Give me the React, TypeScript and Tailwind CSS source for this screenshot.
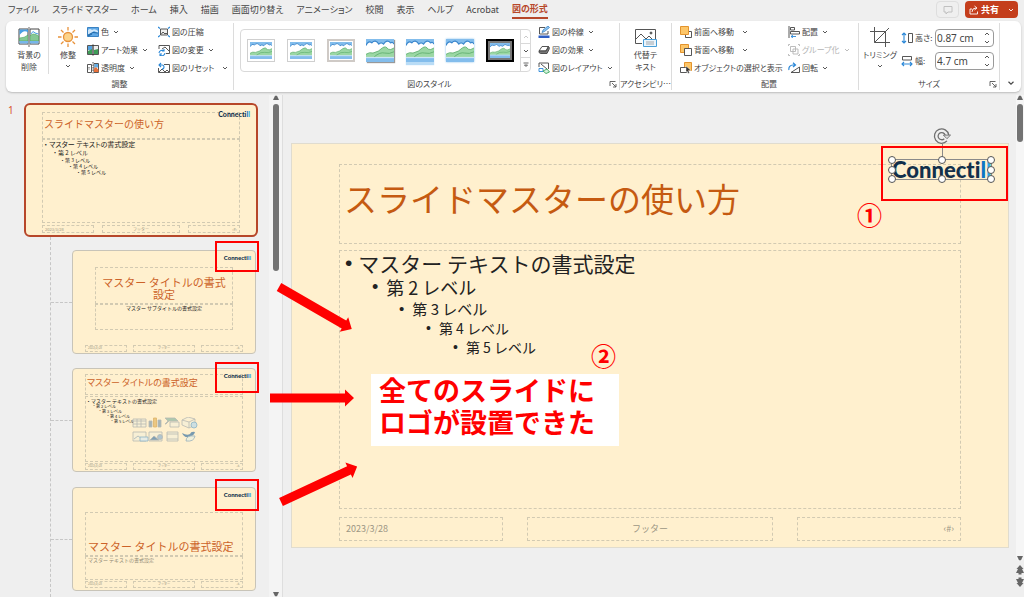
import type { ReactNode } from 'react';
import clsx from 'clsx';

const TABS = ['ファイル', 'スライド マスター', 'ホーム', '挿入', '描画', '画面切り替え', 'アニメーション', '校閲', '表示', 'ヘルプ', 'Acrobat'];

/* ---------- small glyphs ---------- */

function Chevron({ className = '' }: { className?: string }) {
  return (
    <svg viewBox="0 0 6 6" className={clsx('h-1.5 w-1.5 shrink-0', className)} fill="none" stroke="currentColor" strokeWidth=".9">
      <path d="M1 2l2 2 2-2" />
    </svg>
  );
}

function Triangle({ up = false }: { up?: boolean }) {
  return (
    <svg viewBox="0 0 8 6" className="h-1.5 w-2 shrink-0" fill="#666">
      <path d={up ? 'M3 .8h2L7 5H1z' : 'M3 5.2h2L7 1H1z'} />
    </svg>
  );
}

function DoubleTriangle({ up = false }: { up?: boolean }) {
  return (
    <svg viewBox="0 0 8 10" className="h-2.5 w-2 shrink-0" fill="#666">
      <path d={up ? 'M4 0l3.500 4H6l2 4H5.500v1.500h-3V8H0l2-4H.5z' : 'M4 10L.5 6H2L0 2h2.500V.5h3V2H8L6 6h1.500z'} />
    </svg>
  );
}

/** Landscape used by the gallery. */
function Landscape({ className = '' }: { className?: string }) {
  return (
    <svg viewBox="0 0 24 18" preserveAspectRatio="none" className={className}>
      <path d="M0 0h24v18H0z" fill="#83bdec" />
      <path d="M0 5q2-4 5-2 3-3 6 1 2-2 4 0 3-4 6-1 2-1 3 1v8H0z" fill="#fff" />
      <path d="M0 5q2-4 5-2 3-3 6 1 2-2 4 0 3-4 6-1 2-1 3 1" fill="none" stroke="#3a86cc" strokeWidth="1" />
      <path d="M0 12q3-2 6-1 5-1 8-4 3-2 5 1 2 1 5-1v7H0z" fill="#9bd7a4" />
      <path d="M0 12q3-2 6-1 5-1 8-4 3-2 5 1 2 1 5-1M7 14q5-4 9-3 4 1 8-1" fill="none" stroke="#5fae6d" strokeWidth=".7" />
      <path d="M0 14h24v1H0z" fill="#fff" opacity=".6" />
    </svg>
  );
}

function Icon12({ children }: { children: ReactNode }) {
  return (
    <svg viewBox="0 0 12 12" className="h-3 w-3 shrink-0" fill="none" stroke="#444" strokeWidth=".9">
      {children}
    </svg>
  );
}

const icons = {
  color: (
    <Icon12>
      <path d="M.5 1.500h11v9H.5z" fill="#5fa8e6" stroke="#2b78bd" />
      <path d="M1 4q2-2 4 0 3-2 6 1v2L7 5 1 9z" fill="#cfe6f9" stroke="none" />
      <path d="M1 9q5-4 10-2M1 10l4-2" stroke="#17609f" />
    </Icon12>
  ),
  artistic: (
    <Icon12>
      <path d="M.5 1.500h11v9H.5z" fill="#eee" />
      <path d="M1 2h4v4H1z" fill="#56a3e2" stroke="none" />
      <path d="M1 7l4-2v5H1zM7 6l4-1v5H7z" fill="#3f9d58" stroke="none" />
      <path d="M6 .5v11" stroke="#333" strokeWidth="1.200" />
    </Icon12>
  ),
  transparency: (
    <Icon12>
      <path d="M.5 2.500h4v8h-4zM7 1.500h4.500v9H7z" />
      <path d="M7.500 2h3.500v3.500H7.500z" fill="#63aee6" stroke="none" />
      <path d="M7 10V7l2-2 2.500 3v2z" fill="#e8703a" stroke="none" />
      <path d="M6 0v12M2 5v3" strokeDasharray="1.500 1" />
    </Icon12>
  ),
  compress: (
    <Icon12>
      <path d="M2.500 3h7v6h-7z" fill="#eee" />
      <path d="M3 8.500l2-2.500 2 2 1-1 1 1" />
      <path d="M0 1l2 1.500M12 1l-2 1.500M0 11l2-1.500M12 11l-2-1.500" stroke="#2b88d8" strokeWidth="1.200" />
    </Icon12>
  ),
  change: (
    <Icon12>
      <path d="M1 5V1.500h10.500v8H8" />
      <path d="M4 5l3-2 4 4" />
      <path d="M1 9a3 3 0 015-2M7 9a3 3 0 01-5 2M6 5v2H4M2 12v-2h2" stroke="#2b88d8" strokeWidth="1.100" />
    </Icon12>
  ),
  reset: (
    <Icon12>
      <path d="M6 2.500h5.500v8h-11V6" />
      <path d="M1 10l3-3 3 3 2-2 2 2" />
      <path d="M1 3h3a2 2 0 010 4M3 1L1 3l2 2" stroke="#2b88d8" strokeWidth="1.100" />
    </Icon12>
  ),
  border: (
    <Icon12>
      <path d="M7 1.500H1.500V8H10V5" />
      <path d="M4 6.500l1-2.500 5-4 1.500 1.500-5 4z" fill="#8ec5f2" stroke="#2b78bd" strokeWidth=".7" />
      <path d="M.5 9.500h11V12H.5z" fill="#2f5fc4" stroke="none" />
    </Icon12>
  ),
  effect: (
    <Icon12>
      <path d="M1 7l3-4.500h6.500L8 7z" fill="#fff" />
      <path d="M1 7h7l2.500-4.500q1.500 1 .5 3L9 9.500H2.500Q.5 9 1 7z" fill="#777" />
    </Icon12>
  ),
  layout: (
    <Icon12>
      <path d="M1 5V1h9.500v6" />
      <path d="M3 2l6 5" />
      <path d="M1 6.500h4v3H1z" fill="#fff" stroke="#2b88d8" />
      <path d="M5 9l4-2 2.500 3L8 11.500z" fill="#d6f2dd" stroke="#3ba55c" />
    </Icon12>
  ),
  front: (
    <Icon12>
      <path d="M9 5.500h2.500v6h-6V9" />
      <path d="M.5.5h8v8h-8z" fill="#fdc668" stroke="#e08a1e" />
    </Icon12>
  ),
  back: (
    <Icon12>
      <path d="M.5.5h8v8h-8z" fill="#fdc668" stroke="#e08a1e" />
      <path d="M4.500 4.500h7v7h-7z" fill="#fff" />
    </Icon12>
  ),
  select: (
    <Icon12>
      <path d="M4.500.5h7v8h-7z" fill="#fdc668" stroke="#e08a1e" />
      <path d="M.5 5.500h6v5h-6z" fill="#fff" />
      <path d="M6 4l5 4.500H8.500l1 2.500-1.500.5-1-2.500L6 10z" fill="#333" stroke="#fff" strokeWidth=".4" />
    </Icon12>
  ),
  align: (
    <Icon12>
      <path d="M1 0v12M2.500 1.500h4v2.500h-4zM2.500 5.500h9V8h-9z" />
      <path d="M8 10.500H3M5 9l-2 1.500L5 12" stroke="#2b88d8" />
    </Icon12>
  ),
  group: (
    <Icon12>
      <g stroke="#b5b5b5">
        <path d="M2.500 2.500h5v5h-5zM5 5h5v5H5z" />
        <path d="M.5 2V.5H2M10 .5h1.500V2M.5 10v1.500H2M10 11.500h1.500V10" />
      </g>
    </Icon12>
  ),
  rotate: (
    <Icon12>
      <path d="M3 10.500h8.500V5z" />
      <path d="M1 8a4 4 0 014-5h2M5 .8L7.500 3 5 5" stroke="#2b88d8" strokeWidth="1.200" />
    </Icon12>
  ),
  height: (
    <Icon12>
      <path d="M7.500 1.500h4v9h-4z" />
      <path d="M3 .8v10.400M1 3l2-2 2 2M1 9l2 2 2-2" stroke="#2b88d8" strokeWidth="1.100" />
    </Icon12>
  ),
  width: (
    <Icon12>
      <path d="M1.500 1.500h9v3.500h-9z" />
      <path d="M.8 9h10.400M3 7L1 9l2 2M9 7l2 2-2 2" stroke="#2b88d8" strokeWidth="1.100" />
    </Icon12>
  ),
};

/* ---------- ribbon ---------- */

interface CommandProps {
  icon: ReactNode;
  label: string;
  menu?: boolean;
  disabled?: boolean;
  wide?: boolean;
}

function Command({ icon, label, menu = true, disabled = false, wide = false }: CommandProps) {
  return (
    <button type="button" disabled={disabled} className={clsx('flex h-[18px] items-center gap-0.5 whitespace-nowrap', disabled && 'text-[#b5b5b5]')}>
      {icon}
      <span>{label}</span>
      {menu && <Chevron className={wide ? 'ml-1.5' : 'ml-0.5'} />}
    </button>
  );
}

function Launcher() {
  return (
    <svg viewBox="0 0 8 8" className="h-2 w-2" fill="none" stroke="#555" strokeWidth=".9">
      <path d="M1 6V1.500h5.500M3 3l4 4M7 4v3H4" />
    </svg>
  );
}

interface GroupProps {
  label: string;
  className?: string;
  launcher?: boolean;
  children: ReactNode;
}

function Group({ label, className = '', launcher = false, children }: GroupProps) {
  return (
    <section aria-label={label} className={clsx('my-0.5 flex flex-col border-r border-[#dcdcdc]', className)}>
      <div className="flex h-[55px]">{children}</div>
      <div className="relative flex h-3 items-center justify-center">
        <span className="whitespace-nowrap">{label}</span>
        {launcher && (
          <button type="button" aria-label={`${label} の詳細`} className="absolute right-0.5">
            <Launcher />
          </button>
        )}
      </div>
    </section>
  );
}

const FRAMES = [
  'border border-[#cfcfcf] p-0.5',
  'border border-[#cfcfcf] p-0.5',
  'border-2 border-[#cfcac6] p-px',
  'shadow-[1px_1px_1px_#999]',
  'shadow-[0_3px_1px_#b9dcf6]',
  'shadow-[0_0_2px_#83bdec]',
  'border-2 border-black bg-[#777] p-0.5',
];

function Gallery() {
  return (
    <div className="mt-1.5 flex h-[43px] flex-1 rounded border border-[#d9d9d9]">
      <div className="flex flex-1 items-center justify-around">
        {FRAMES.map((frame, i) => (
          <button key={i} type="button" aria-label={`スタイル ${i + 1}`} className={clsx('h-[23px] w-7', frame)}>
            <Landscape className="h-full w-full" />
          </button>
        ))}
      </div>
      <div className="flex w-2.5 flex-col divide-y divide-[#d9d9d9] border-l border-[#d9d9d9]">
        <button type="button" aria-label="上へ" className="flex flex-1 items-center justify-center text-[#c4c4c4]">
          <Chevron className="rotate-180" />
        </button>
        <button type="button" aria-label="下へ" className="flex flex-1 items-center justify-center">
          <Chevron />
        </button>
        <button type="button" aria-label="その他" className="flex flex-1 items-center justify-center">
          <svg viewBox="0 0 6 6" className="h-1.5 w-1.5" fill="none" stroke="currentColor" strokeWidth=".8">
            <path d="M.5 1h5M1.500 3L3 4.500 4.500 3z" />
          </svg>
        </button>
      </div>
    </div>
  );
}

function SizeField({ id, icon, label, value }: { id: string; icon: ReactNode; label: string; value: string }) {
  return (
    <div className="flex h-[18px] items-center">
      {icon}
      <label htmlFor={id} className="ml-0.5 w-5 whitespace-nowrap">
        {label}
      </label>
      <div className="flex h-[18px] w-[59px] items-center rounded border border-[#9a9a9a] pl-px">
        <input id={id} defaultValue={value} className="w-0 flex-1 font-['Noto_Sans',sans-serif] text-[10px] text-[#444] outline-none" />
        <span className="flex w-3 flex-col items-center gap-0.5">
          <Chevron className="rotate-180" />
          <Chevron />
        </span>
      </div>
    </div>
  );
}

function Ribbon() {
  return (
    <div className="mr-[3px] ml-1.5 flex h-[71px] rounded-md bg-white text-[8px] leading-[12px] text-[#444] shadow-[0_1px_2px_#bbb] [font-feature-settings:'palt']">
      <Group label="調整" className="w-[228px]">
        <button type="button" className="my-1 flex w-[43px] flex-col items-center border-r border-[#dcdcdc] pl-1">
          <svg viewBox="0 0 22 20" className="mb-0.5 h-5 w-[22px] shrink-0" fill="none">
            <path d="M1 2h9v15H1z" fill="#fff" stroke="#444" />
            <path d="M12 2h9v15h-9z" fill="#fff" stroke="#444" />
            <path d="M1.500 2.500H10v3Q6 2 1.500 8z" fill="#4a9fe4" />
            <path d="M13 7q2-4 4-1l3.500 1" stroke="#4a9fe4" />
            <path d="M1.500 11q5 0 8.500-3v6H1.500zM12 9q3-4 8.500 0v5H12z" fill="#86c894" stroke="#4aa55c" strokeWidth=".6" />
            <path d="M1.500 14h19v2.500h-19z" fill="#76b6ea" />
            <path d="M11 0v20" stroke="#999" strokeWidth="1.500" />
          </svg>
          <span className="whitespace-nowrap">
            背景の
            <br />
            削除
          </span>
        </button>
        <button type="button" className="my-1 flex w-[38px] flex-col items-center">
          <svg viewBox="0 0 20 20" className="mb-0.5 h-5 w-5 shrink-0" fill="none" stroke="#e8923b" strokeWidth="1.300">
            <circle cx="10" cy="10" r="4.500" fill="#fcd38a" />
            <path d="M10 0v3.500M10 16.500V20M0 10h3.500M16.500 10H20M3 3l2.500 2.500M14.500 14.500L17 17M17 3l-2.500 2.500M5.500 14.500L3 17" />
          </svg>
          <span>修整</span>
          <Chevron className="mt-0.5" />
        </button>
        <div className="flex w-[71px] flex-col">
          <Command icon={icons.color} label="色" />
          <Command icon={icons.artistic} label="アート効果" />
          <Command icon={icons.transparency} label="透明度" />
        </div>
        <div className="flex flex-col">
          <Command icon={icons.compress} label="図の圧縮" menu={false} />
          <Command icon={icons.change} label="図の変更" />
          <Command icon={icons.reset} label="図のリセット" wide />
        </div>
      </Group>

      <Group label="図のスタイル" launcher className="flex-1 pl-1.5">
        <Gallery />
        <div className="ml-[7px] flex w-[81px] flex-col">
          <Command icon={icons.border} label="図の枠線" />
          <Command icon={icons.effect} label="図の効果" />
          <Command icon={icons.layout} label="図のレイアウト" />
        </div>
      </Group>

      <Group label="アクセシビリ…" className="w-[52px]">
        <button type="button" className="my-1 flex flex-1 flex-col items-center">
          <svg viewBox="0 0 24 20" className="mb-0.5 h-5 w-6 shrink-0" fill="none" stroke="#555">
            <path d="M8 16.500H1.500v-14h20V12" />
            <path d="M2 12l5-5 5 5 3-3 4 4" />
            <circle cx="17" cy="6" r="1" fill="#555" />
            <path d="M9.500 12.500h13v7h-13z" fill="#eaf5fd" stroke="#4a9fd8" />
            <path d="M12 15h8M12 17h8" stroke="#888" strokeWidth=".7" />
          </svg>
          <span className="whitespace-nowrap">
            代替テ
            <br />
            キスト
          </span>
        </button>
      </Group>

      <Group label="配置" className="w-[187px] pl-2">
        <div className="flex w-[108px] flex-col">
          <Command icon={icons.front} label="前面へ移動" wide />
          <Command icon={icons.back} label="背面へ移動" wide />
          <Command icon={icons.select} label="オブジェクトの選択と表示" menu={false} />
        </div>
        <div className="flex flex-col">
          <Command icon={icons.align} label="配置" />
          <Command icon={icons.group} label="グループ化" disabled />
          <Command icon={icons.rotate} label="回転" />
        </div>
      </Group>

      <Group label="サイズ" launcher className="w-[141px]">
        <button type="button" className="my-1 flex w-[42px] flex-col items-center">
          <svg viewBox="0 0 20 20" className="mb-0.5 h-5 w-5 shrink-0" fill="none" stroke="#555">
            <path d="M4.500 0v15.500H20M0 4.500h15.500V20M4.500 15.500L19 1" />
          </svg>
          <span className="whitespace-nowrap">トリミング</span>
          <Chevron className="mt-0.5" />
        </button>
        <div className="mt-1.5 flex flex-col gap-[5px]">
          <SizeField id="pic-height" icon={icons.height} label="高さ:" value="0.87 cm" />
          <SizeField id="pic-width" icon={icons.width} label="幅:" value="4.7 cm" />
        </div>
      </Group>

      <button type="button" aria-label="リボンを折りたたむ" className="flex w-[21px] items-end justify-center pb-1.5">
        <Chevron className="scale-125" />
      </button>
    </div>
  );
}

function TabBar() {
  return (
    <header className="flex h-[21px] items-start pr-1.5 pl-2 text-[9px] text-[#444]">
      <nav className="flex h-5 items-center gap-[13px] whitespace-nowrap [font-feature-settings:'palt']">
        {TABS.map((tab) => (
          <button key={tab} type="button" className="leading-[16px]">
            {tab}
          </button>
        ))}
        <button type="button" className="border-b-2 border-[#b7472a] leading-[16px] font-bold text-[#b7472a]">
          図の形式
        </button>
      </nav>
      <div className="mt-px ml-auto flex gap-1.5">
        <button type="button" aria-label="コメント" className="flex h-[17px] w-[23px] items-center justify-center rounded border border-[#dedede]">
          <svg viewBox="0 0 10 10" className="h-2.5 w-2.5" fill="none" stroke="#c0c0c0">
            <path d="M1 1.500h8v5.500H5L3 9V7H1z" />
          </svg>
        </button>
        <button type="button" className="flex h-[17px] w-[53px] items-center rounded bg-[#c43e1c] pr-1 pl-1 font-bold text-white">
          <svg viewBox="0 0 10 10" className="mr-0.5 h-2.5 w-2.5" fill="none" stroke="#fff" strokeWidth=".9">
            <path d="M3 4H1v5h7.500V6.500M3 7q0-4 4-4M5.500 1l2.500 2-2.500 2" />
          </svg>
          共有
          <Chevron className="ml-auto" />
        </button>
      </div>
    </header>
  );
}

/* ---------- slides ---------- */

function Logo({ className }: { className: string }) {
  return (
    <span className={clsx("flex font-['Lato',sans-serif] leading-none font-black text-[#12304c] [font-variant-ligatures:none]", className)}>
      Connecti<span className="text-[#0f75c4]">l</span>
      <span className="text-[#29abe2]">l</span>
    </span>
  );
}

const LEVELS = ['第 2 レベル', '第 3 レベル', '第 4 レベル', '第 5 レベル'];

function Footers({ className }: { className: string }) {
  return (
    <div className={clsx('grid grid-cols-[2fr_3fr_2fr] text-[#9c9684] *:flex *:items-center *:border *:border-dashed *:border-[#d2cab2]', className)}>
      <span>2023/3/28</span>
      <span className="justify-center">フッター</span>
      <span className="justify-end">‹#›</span>
    </div>
  );
}

const THUMB_FOOTER = 'gap-1.5 h-[7px] text-[3px] leading-none *:px-0.5';
const BOX = 'border border-dashed border-[#d2cab2]';

function Thumb({ mark, children }: { mark: string; children: ReactNode }) {
  return (
    <li className="relative ml-[72px] h-[104px] w-[184px] rounded border border-[#c8c4b8] bg-[#fff0ce] px-3 before:absolute before:top-1/2 before:-left-[22px] before:w-[21px] before:border-t before:border-dashed before:border-[#c6c6c6]">
      {children}
      <Logo className="absolute top-1 right-1 text-[6px]" />
      <span className={clsx('absolute -right-1 w-11 border-2 border-[#f00]', mark)} />
    </li>
  );
}

function ContentIcons() {
  return (
    <svg viewBox="0 0 66 26" className="absolute top-12 left-[59px] h-[26px] w-[66px] opacity-70" fill="none" stroke="#9aa3a8" strokeWidth=".8">
      <path d="M1 2h13v8H1zM1 4h13M5 2v8M9 2v8M1 7h13" fill="#f5efd8" />
      <path d="M17 4h3v6h-3z" fill="#7f9cb0" />
      <path d="M21.500 1h3v9h-3z" fill="#e3b662" stroke="#d09c40" />
      <path d="M26 3h3v7h-3z" fill="#7f9cb0" />
      <path d="M33 1h10l3 3h-9l-3 3H33l3-3z" fill="#8cb8a0" />
      <path d="M38 5h9v5h-9z" fill="#f5efd8" />
      <path d="M50 3l6-3 7 2v6l-6 3-7-3zM50 3l7 2 6-3M57 5v6" fill="#f5efd8" />
      <circle cx="62" cy="8" r="3" fill="#b9d8ea" stroke="#5d9cc4" />
      <path d="M1 15h13v9H1z" fill="#f5efd8" />
      <path d="M2 22l4-3 3 2" stroke="#7f9cb0" />
      <path d="M8 20h8v4H8z" fill="#dce9ee" stroke="#5d9cc4" />
      <path d="M17 15h13v9H17z" fill="#f5efd8" />
      <path d="M18 23l4-4 5 4z" fill="#4d7fa8" />
      <circle cx="28" cy="20" r="2.500" fill="#8fb4cf" />
      <path d="M35 15h11v9H35zM35 17h11M35 22h11" fill="#f5efd8" />
      <path d="M50 16q5 3 8 1 1-3 5-2-1 4-6 5-5 1-7-4z" fill="#3f76a3" stroke="none" />
      <path d="M54 24q0-6 9-5-1 6-9 5z" fill="#e9efe0" stroke="#6f97b5" />
    </svg>
  );
}

function SlidePane() {
  return (
    <aside className="flex w-[283px] shrink-0 border-r border-[#dedede]">
      <ol className="relative min-w-0 flex-1">
        <span className="absolute top-[142px] bottom-0 left-[50px] border-l border-dashed border-[#c6c6c6]" />
        <span className="absolute top-2 left-2 font-['Noto_Sans',sans-serif] text-[10px] leading-[14px] text-[#d9532c]">1</span>
        <li className="relative mt-2 mb-[13px] ml-6 h-[134px] w-[234px] rounded-md border-2 border-[#b7472a] bg-[#fff0ce] px-4 pt-[7px]">
          <div className={clsx(BOX, 'flex h-[27px] items-center px-px pb-1 text-[10px] whitespace-nowrap text-[#cc6228]')}>スライドマスターの使い方</div>
          <div className={clsx(BOX, 'h-[84px] pl-px text-[5px] leading-[6px] text-[#222]')}>
            <p className="text-[7px] leading-[9px] [font-feature-settings:'palt']">・ マスター テキストの書式設定</p>
            <p className="pl-2 text-[6px] leading-[8px]">・{LEVELS[0]}</p>
            <p className="pl-4">・{LEVELS[1]}</p>
            <p className="pl-6">・{LEVELS[2]}</p>
            <p className="pl-8">・{LEVELS[3]}</p>
          </div>
          <Footers className="mt-0.5 h-2 gap-2 text-[4px] leading-none *:px-0.5" />
          <Logo className="absolute top-1.5 right-1.5 text-[7px]" />
        </li>
        <Thumb mark="-top-[10px] h-[31px]">
          <div className="mx-2.5 pt-4">
            <h3 className={clsx(BOX, 'h-[37px] pt-2 text-center text-[11px] leading-[12px] text-[#cc6228]')}>
              マスター タイトルの書式
              <br />
              設定
            </h3>
            <p className={clsx(BOX, 'h-[26px] text-center text-[5px] leading-[6px] text-[#222]')}>マスター サブタイトルの書式設定</p>
          </div>
          <Footers className={clsx('mt-[15px]', THUMB_FOOTER)} />
        </Thumb>
        <div className="h-3.5" />
        <Thumb mark="-top-[7px] h-[31px]">
          <div className="pt-[5px]">
            <h3 className={clsx(BOX, "h-[21px] pl-px text-[9px] leading-[16px] whitespace-nowrap text-[#cc6228] [font-feature-settings:'palt']")}>マスター タイトルの書式設定</h3>
            <div className={clsx(BOX, 'mt-px h-[66px] text-[4px] leading-[5px] text-[#222]')}>
              <p className="text-[5px] leading-[7px]">・マスター テキストの書式設定</p>
              <p className="pl-1.5">・{LEVELS[0]}</p>
              <p className="pl-3">・{LEVELS[1]}</p>
              <p className="pl-5">・{LEVELS[2]}</p>
              <p className="pl-6">・{LEVELS[3]}</p>
            </div>
          </div>
          <ContentIcons />
          <Footers className={clsx('mt-px', THUMB_FOOTER)} />
        </Thumb>
        <div className="h-[15px]" />
        <Thumb mark="-top-[9px] h-8">
          <div className="pt-6">
            <h3 className={clsx(BOX, 'flex h-[44px] items-end pl-0.5 text-[11px] leading-[18px] whitespace-nowrap text-[#cc6228]')}>マスター タイトルの書式設定</h3>
            <p className={clsx(BOX, 'h-6 pl-0.5 text-[5px] leading-[6px] text-[#8f8974]')}>マスター テキストの書式設定</p>
          </div>
          <Footers className={clsx('mt-px', THUMB_FOOTER)} />
        </Thumb>
      </ol>
      <div className="flex w-[13px] flex-col items-center bg-[#f4f4f4]">
        <Triangle up />
        <span className="mt-[3px] h-[167px] w-1.5 rounded-full bg-[#737373]" />
        <span className="flex-1" />
        <Triangle />
      </div>
    </aside>
  );
}

const HANDLES = [
  'left-0 top-0', 'left-1/2 top-0', 'left-full top-0',
  'left-0 top-1/2', 'left-full top-1/2',
  'left-0 top-full', 'left-1/2 top-full', 'left-full top-full',
];

/** Selected logo picture, with the sizing handles and the rotation handle. */
function SelectedLogo() {
  return (
    <div className="absolute top-[15px] right-4 h-[21px] w-[101px] border border-[#8a8a8a]">
      <Logo className="absolute -top-px left-0 text-[22px]" />
      <span className="absolute bottom-full left-1/2 h-4 border-l border-[#8a8a8a]" />
      <svg viewBox="0 0 20 20" className="absolute bottom-[34px] left-1/2 h-[18px] w-[18px] -translate-x-1/2" fill="none" stroke="#6f6f6f">
        <path d="M17.500 9A8 8 0 1015.500 15.500" strokeWidth="1.400" />
        <path d="M13.500 9A4 4 0 1012.500 13" strokeWidth="1.400" />
        <path d="M11.500 9h8l-4 4z" fill="#ddd" />
      </svg>
      {HANDLES.map((pos) => (
        <span key={pos} className={clsx('absolute h-2 w-2 -translate-x-1/2 -translate-y-1/2 rounded-full border border-[#555] bg-white', pos)} />
      ))}
    </div>
  );
}

const BULLETS = [
  { text: 'マスター テキストの書式設定', style: 'pl-[5px] text-[21px] leading-[24px] gap-1.5' },
  { text: LEVELS[0], style: 'pl-8 text-[18px] leading-[24px] gap-2' },
  { text: LEVELS[1], style: 'pl-[59px] text-[15px] leading-[20px] gap-2' },
  { text: LEVELS[2], style: 'pl-[86px] text-[14px] leading-[19px] gap-2' },
  { text: LEVELS[3], style: 'pl-[113px] text-[14px] leading-[19px] gap-2' },
];

function Editor() {
  return (
    <main className="flex min-w-0 flex-1">
      <div className="min-w-0 flex-1 pt-12 pr-1.5 pl-2">
        <article className="relative h-[405px] border border-[#e0dccf] bg-[#fff0ce] px-[47px] pt-5">
          <h1 className={clsx(BOX, 'flex h-20 items-center pb-2.5 pl-1 text-[33px] whitespace-nowrap text-[#c55a11]')}>スライドマスターの使い方</h1>
          <ul className={clsx(BOX, 'mt-1.5 h-[259px] text-[#222]')}>
            {BULLETS.map(({ text, style }) => (
              <li key={text} className={clsx('flex items-center whitespace-nowrap', style)}>
                <span className="font-['Liberation_Sans',sans-serif]">•</span>
                {text}
              </li>
            ))}
          </ul>
          <Footers className="mt-2 h-6 gap-6 text-[9px] *:px-1.5" />

          <SelectedLogo />
          <span className="absolute top-0.5 right-0 h-[55px] w-[127px] border-2 border-[#f00]" />
          <span className="absolute top-14 right-[126px] text-[25px] leading-[28px] font-bold text-[#f00]">①</span>
          <span className="absolute top-[197px] left-[299px] text-[25px] leading-[28px] font-bold text-[#f00]">②</span>
          <p className="absolute top-[230px] left-[79px] h-[72px] w-[248px] bg-white pl-2 text-[27px] leading-[32px] font-bold whitespace-nowrap text-[#f00]">
            全てのスライドに
            <br />
            ロゴが設置できた
          </p>
        </article>
      </div>
      <div className="flex w-[9px] flex-col items-center">
        <div className="flex h-[466px] flex-col items-center rounded-b bg-[#f6f6f6]">
          <Triangle up />
          <span className="mt-[3px] h-[38px] w-1.5 rounded-full bg-[#737373]" />
          <span className="flex-1" />
          <Triangle />
        </div>
        <div className="mt-1 flex flex-col gap-0.5">
          <DoubleTriangle up />
          <DoubleTriangle />
        </div>
      </div>
    </main>
  );
}

/** Arrows that point from the thumbnails to the note on the slide. */
function Arrows() {
  const shape = 'M0-4.500h75v-4l9 8.500-9 8.500v-4H0z';
  return (
    <svg className="pointer-events-none absolute top-0 left-0 h-full w-full" fill="#f00">
      <path d={shape} transform="translate(279 192) rotate(30)" />
      <path d={shape} transform="translate(270 303)" />
      <path d={shape} transform="translate(281 407) rotate(-25)" />
    </svg>
  );
}

export default function App() {
  return (
    <div lang="ja" className="flex h-screen flex-col overflow-hidden bg-[#efefef] font-['Noto_Sans_CJK_JP',sans-serif]">
      <TabBar />
      <Ribbon />
      <div className="relative mt-[3px] flex min-h-0 flex-1">
        <SlidePane />
        <Editor />
        <Arrows />
      </div>
    </div>
  );
}
